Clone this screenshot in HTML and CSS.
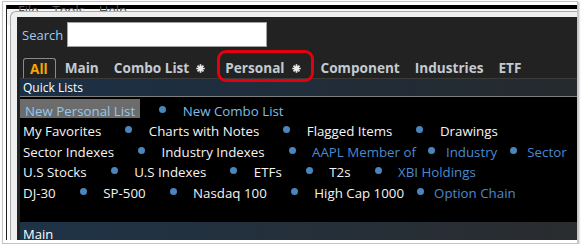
FILE: index.html
```html
<!DOCTYPE html>
<html lang="en">
<head>
  <meta charset="UTF-8">
  <title>Quick Lists</title>
  <link rel="stylesheet" href="styles.css">
</head>
<body>
  <div class="shot">
    <div class="app">
      <div class="menubar">
        <span>File</span>
        <span>Tools</span>
        <span>Help</span>
      </div>

      <div class="dialog">
        <div class="dialog-body">
          <div class="search">
            <label for="q">Search</label>
            <input id="q" type="text">
          </div>

          <div class="tabs">
            <span class="tab active">All</span>
            <span class="tab">Main</span>
            <span class="tab">Combo List
              <svg class="star" width="9" height="9" viewBox="0 0 10 10"><path d="M5 0.3V9.7M0.3 5H9.7M1.7 1.7L8.3 8.3M8.3 1.7L1.7 8.3" stroke="#ececec" stroke-width="1.9"/></svg>
            </span>
            <span class="tab marked">Personal
              <svg class="star" width="9" height="9" viewBox="0 0 10 10"><path d="M5 0.3V9.7M0.3 5H9.7M1.7 1.7L8.3 8.3M8.3 1.7L1.7 8.3" stroke="#ececec" stroke-width="1.9"/></svg>
              <span class="mark"></span>
            </span>
            <span class="tab">Component</span>
            <span class="tab">Industries</span>
            <span class="tab">ETF</span>
          </div>

          <div class="panel">
            <div class="panel-head">Quick Lists</div>

            <div class="lists">
              <div class="row">
                <span class="item selected">New Personal List</span><span class="dot"></span><span class="item light">New Combo List</span>
              </div>
              <div class="row">
                <span class="item">My Favorites</span><span class="dot"></span><span class="item">Charts with Notes</span><span class="dot"></span><span class="item">Flagged Items</span><span class="dot"></span><span class="item">Drawings</span>
              </div>
              <div class="row">
                <span class="item">Sector Indexes</span><span class="dot"></span><span class="item">Industry Indexes</span><span class="dot"></span><span class="item link">AAPL Member of</span><span class="dot tight"></span><span class="item link">Industry</span><span class="dot tight"></span><span class="item link">Sector</span>
              </div>
              <div class="row">
                <span class="item">U.S Stocks</span><span class="dot"></span><span class="item">U.S Indexes</span><span class="dot"></span><span class="item">ETFs</span><span class="dot"></span><span class="item">T2s</span><span class="dot"></span><span class="item link">XBI Holdings</span>
              </div>
              <div class="row">
                <span class="item">DJ-30</span><span class="dot"></span><span class="item">SP-500</span><span class="dot"></span><span class="item">Nasdaq 100</span><span class="dot"></span><span class="item">High Cap 1000</span><span class="dot tight"></span><span class="item link">Option Chain</span>
              </div>
            </div>

            <div class="panel-foot">Main</div>
          </div>
        </div>
      </div>
    </div>
  </div>
</body>
</html>
```

FILE: styles.css
```css
body {
  margin: 0;
  background-color: #fff;
  font-family: "Open Sans", "Noto Sans", sans-serif;
}
.shot {
  margin: 1px 0 0 2px;
  width: 576px;
  height: 243px;
  box-sizing: border-box;
  padding: 3px 0 0 3px;
  border: 1px solid #c4c4c4;
  box-shadow: 1px 1px 2px rgba(0, 0, 0, 0.3);
}
.app {
  position: relative;
  height: 235px;
  border-left: 1px solid #222;
  background-color: #fff;
  overflow: hidden;
}
.menubar {
  display: flex;
  gap: 14px;
  height: 20px;
  padding-left: 11px;
  background: linear-gradient(#000 0 4px, #f4f4f4 4px);
  color: #555;
  font-size: 13px;
  line-height: 11px;
}
.dialog {
  position: absolute;
  left: 3px;
  top: 6px;
  right: 0;
  bottom: 0;
  box-sizing: border-box;
  padding: 5px 0 0 6px;
  background-color: #efefef;
  border-top: 1px solid #a9a9a9;
  border-left: 1px solid #a9a9a9;
  border-top-left-radius: 6px;
}
.dialog-body {
  display: flex;
  flex-direction: column;
  height: 100%;
  box-sizing: border-box;
  padding: 5px 0 0 3px;
  background-color: #222;
}
.search {
  display: flex;
  align-items: center;
  gap: 4px;
  height: 25px;
  padding-left: 2px;
}
.search label {
  color: #9ccbeb;
  font-size: 13px;
}
.search input {
  width: 200px;
  height: 25px;
  box-sizing: border-box;
  margin: 0;
  padding: 0 3px;
  border: 1px solid #a0a0a0;
  background-color: #fff;
}
.tabs {
  display: flex;
  height: 20px;
  margin-top: 11px;
  padding-left: 3px;
}
.tab {
  position: relative;
  display: flex;
  align-items: center;
  margin-right: 15px;
  color: #c3cad1;
  font-size: 13.6px;
  font-weight: 700;
  line-height: 20px;
  white-space: nowrap;
}
.tab.active {
  margin-right: 9px;
  padding: 0 7px 0 6px;
  border: 1px solid #8a8a8a;
  border-bottom: 0;
  border-radius: 3px 3px 0 0;
  color: #f7a500;
  line-height: 19px;
}
.star {
  margin: 0 5px 0 7px;
}
.mark {
  position: absolute;
  left: -8px;
  top: -8px;
  right: -8px;
  bottom: -4px;
  border: 3px solid #e3000f;
  border-radius: 9px;
}
.panel {
  display: flex;
  flex-direction: column;
  flex: 1;
  min-height: 0;
  background-color: #000;
}
.panel-head {
  height: 17px;
  padding-left: 3px;
  border-top: 1px solid #3b3b3b;
  border-bottom: 1px solid #7d7d7d;
  background: linear-gradient(to right, #1b3046, #262a2e);
  color: #fff;
  font-size: 12px;
  line-height: 17px;
}
.lists {
  flex: 1;
  padding-top: 3.7px;
  font-size: 13.3px;
}
.row {
  height: 20.5px;
  padding-left: 3px;
  color: #f4f4f4;
  line-height: 20.5px;
  white-space: nowrap;
}
.item.link {
  color: #4a8ad0;
}
.item.light {
  color: #7cbde8;
}
.item.selected {
  display: inline-block;
  height: 19px;
  box-sizing: border-box;
  margin: -2px -5px 0 -3px;
  padding: 5.5px 5px 0 5px;
  background-color: #6c6c6c;
  color: #90c8ee;
  line-height: 13px;
}
.dot {
  display: inline-block;
  width: 7px;
  height: 7px;
  margin: 0 16.5px 0 24px;
  border-radius: 50%;
  background-color: #4a85bd;
  vertical-align: 3px;
}
.dot.tight {
  margin: 0 10.5px 0 12.5px;
}
.panel-foot {
  height: 18px;
  box-sizing: border-box;
  padding: 4px 0 0 3px;
  background: linear-gradient(to right, #1e3347, #2a2c2e);
  color: #fff;
  font-size: 13px;
  line-height: 17.7px;
}
```
